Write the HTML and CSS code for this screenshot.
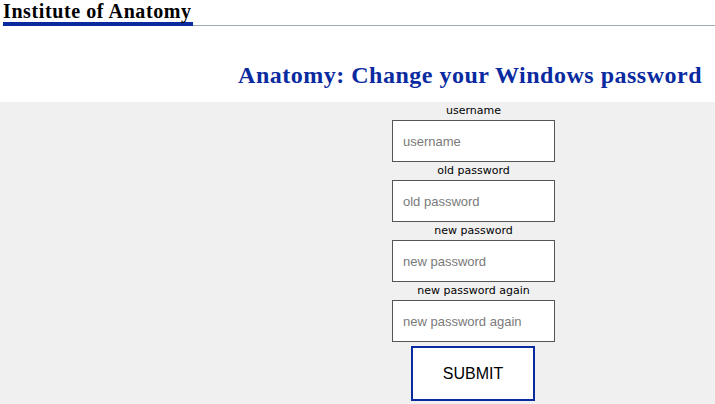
FILE: index.html
```html
<!DOCTYPE html>
<html>
<head>
<meta charset="utf-8">
<title>Anatomy: Change your Windows password</title>
<link rel="stylesheet" href="styles.css">
</head>
<body>
<div class="topbar"><span class="brand">Institute of Anatomy</span></div>
<div class="titlebar"><h1 class="title">Anatomy: Change your Windows password</h1></div>
<div class="panel">
  <form class="form">
    <label class="lbl" for="u">username</label>
    <input class="field" id="u" type="text" placeholder="username">
    <label class="lbl" for="o">old password</label>
    <input class="field" id="o" type="password" placeholder="old password">
    <label class="lbl" for="n">new password</label>
    <input class="field" id="n" type="password" placeholder="new password">
    <label class="lbl" for="a">new password again</label>
    <input class="field" id="a" type="password" placeholder="new password again">
    <button class="submit" type="button">SUBMIT</button>
  </form>
</div>
</body>
</html>
```
FILE: styles.css
```css
html, body {
  margin: 0;
  padding: 0;
  background: #ffffff;
}
body {
  width: 715px;
  height: 404px;
  overflow: hidden;
}
.topbar {
  margin-left: 3px;
  height: 25px;
  border-bottom: 1px solid #a2aab8;
  display: flex;
  align-items: flex-end;
}
.brand {
  font-family: "Liberation Serif", serif;
  font-weight: bold;
  font-size: 20px;
  letter-spacing: 0.6px;
  line-height: 21px;
  color: #000;
  border-bottom: 4px solid #0a2ba0;
  margin-bottom: -1px;
  width: 190px;
  white-space: nowrap;
}
.titlebar {
  height: 76px;
  display: flex;
  justify-content: flex-end;
  align-items: flex-start;
  padding-right: 13px;
}
.title {
  margin: 35px 0 0 0;
  font-family: "Liberation Serif", serif;
  font-weight: bold;
  font-size: 24px;
  letter-spacing: 0.5px;
  line-height: 29px;
  color: #0a2ba0;
}
.panel {
  background: #f0f0f0;
  height: 302px;
}
.form {
  margin: 0 0 0 392px;
  width: 163px;
  display: flex;
  flex-direction: column;
  align-items: center;
}
.lbl {
  height: 18px;
  line-height: 17px;
  font-family: "DejaVu Sans", Tahoma, sans-serif;
  font-size: 11px;
  color: #000;
  white-space: nowrap;
}
.field {
  box-sizing: border-box;
  width: 163px;
  height: 42px;
  margin: 0;
  border: 1px solid #555555;
  background: #fff;
  padding: 0 10px;
  font-family: "Liberation Sans", Arial, sans-serif;
  font-size: 13px;
  outline: none;
}
.field::placeholder {
  color: #7a7a7a;
}
.submit {
  box-sizing: border-box;
  align-self: flex-start;
  margin: 4px 0 0 19px;
  width: 124px;
  height: 55px;
  border: 2px solid #0a2ba0;
  background: #fff;
  font-family: "Liberation Sans", Arial, sans-serif;
  font-size: 16px;
  color: #000;
  padding: 0;
}
```
